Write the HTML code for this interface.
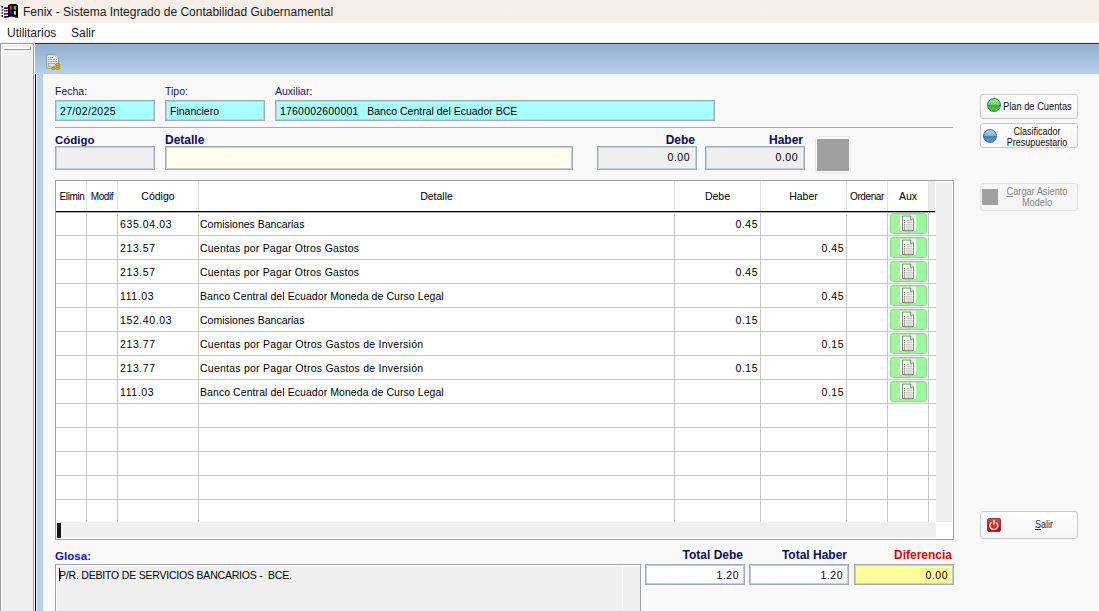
<!DOCTYPE html>
<html><head><meta charset="utf-8">
<style>
*{margin:0;padding:0;box-sizing:border-box}
html,body{width:1099px;height:611px;overflow:hidden;background:#f9f9f9}
body{position:relative;font-family:"Liberation Sans",sans-serif;color:#000}
.a{position:absolute}
.t{position:absolute;white-space:pre;line-height:13px;font-size:10.5px}
.lbl{color:#15155a}
.bl{font-weight:bold;color:#0c0c58;font-size:12px}
.box{position:absolute;border:1px solid #9eabb8;box-shadow:inset 0 0 0 1px #c6ced8}
.cy{background:#aaffff}
.gr{background:#f0f0f0}
.vl{position:absolute;width:1px;background:#c8c8c8}
.hl{position:absolute;height:1px;background:#c8c8c8}
.num{position:absolute;white-space:pre;line-height:13px;font-size:10.5px;text-align:right;letter-spacing:0.5px}
.btn{position:absolute;border:1px solid #c9c9c9;border-radius:3px;background:linear-gradient(#ffffff,#f6f6f6)}
.aux{position:absolute;left:890px;width:37px;height:21px;border-radius:3px;background:#9ff69f;border:1px solid #8ad88a}
.aux i{position:absolute;left:9px;top:1px;width:16px;height:16px;background:#fff}
</style></head><body>
<!-- title bar -->
<div class="a" style="left:0;top:0;width:1099px;height:23px;background:linear-gradient(#f8efe8 0,#f7f0ea 75%,#f5f1e6 100%)"></div>
<svg class="a" style="left:0;top:0" width="20" height="20" viewBox="0 0 20 20">
<path d="M8 5.5 L10 4 L16 4 L18 5.5 L18 18 L16 17.5 L11 16.6 L8 17.6 Z" fill="#000"/>
<path d="M10 6 L12.3 5.8 L12.3 9.6 L10 9.8Z" fill="#e02424"/><path d="M13.8 6 L16.2 6.3 L16.2 9.8 L13.8 9.6Z" fill="#38d838"/>
<path d="M9.8 10.8 L12.3 10.8 L12.3 14.6 L9.8 14.4Z" fill="#1414d8"/><path d="M13.9 11 L16 11.3 L16 14.8 L13.9 14.4Z" fill="#f0e830"/>
<rect x="1.6" y="6" width="1.4" height="1.8" fill="#000"/><rect x="1.6" y="9" width="1.4" height="1.8" fill="#8a3a3a"/><rect x="1.6" y="12" width="1.4" height="1.8" fill="#3030a0"/><rect x="1.6" y="15" width="1.4" height="1.8" fill="#000"/>
<path d="M4 7.6 L8 7.2 L8 8.8 L4 9Z" fill="#000"/><path d="M4 10.2 L8 10 L8 11.6 L4 11.8Z" fill="#d41818"/><path d="M4 13.2 L8 13 L8 14.6 L4 14.8Z" fill="#1010a0"/><path d="M4 16.2 L8 16 L8 17.6 L4 17.8Z" fill="#000"/>
</svg>
<div class="t" style="left:23px;top:5px;font-size:12px;line-height:14px;color:#1a1a1a">Fenix - Sistema Integrado de Contabilidad Gubernamental</div>
<!-- menu -->
<div class="a" style="left:0;top:23px;width:1099px;height:20px;background:#fff"></div>
<div class="a" style="left:0;top:42px;width:1099px;height:1px;background:#ececec"></div>
<div class="t" style="left:7px;top:26px;font-size:12px;line-height:14px;color:#1a1a1a">Utilitarios</div>
<div class="t" style="left:71px;top:26px;font-size:12px;line-height:14px;color:#1a1a1a">Salir</div>
<!-- left panel -->
<div class="a" style="left:0;top:43px;width:34px;height:568px;background:#f0f0f0;border:1px solid #a0a0a0;border-bottom:none;box-shadow:inset 1px 1px 0 #fafafa"></div>
<div class="a" style="left:4px;top:47px;width:27px;height:3px;background:#fff;border-bottom:1px solid #a0a0a0;border-right:1px solid #a0a0a0;"></div>
<!-- MDI child -->
<div class="a" style="left:34px;top:43px;width:1px;height:568px;background:#f8f8f8"></div>
<div class="a" style="left:35px;top:43px;width:1064px;height:1px;background:#2a3542"></div>
<div class="a" style="left:35px;top:44px;width:1064px;height:30px;background:linear-gradient(#93aecf,#b7d1ea)"></div>
<div class="a" style="left:35px;top:74px;width:1px;height:537px;background:#000"></div>
<div class="a" style="left:36px;top:74px;width:1px;height:537px;background:#f4f4f4"></div>
<div class="a" style="left:37px;top:74px;width:6px;height:537px;background:#b7d1ea"></div>
<!-- header icon -->
<svg class="a" style="left:42px;top:50px" width="22" height="22" viewBox="0 0 22 22">
<path d="M4.8 4.8 H13.2 L16.2 7.8 V18.2 H4.8 Z" fill="#f4f7f7" stroke="#7f8c8c" stroke-width="0.9"/>
<path d="M13.2 4.8 V7.8 H16.2" fill="#ffffff" stroke="#9aa" stroke-width="0.6"/>
<rect x="6.3" y="7" width="1" height="1" fill="#667"/><rect x="8" y="7" width="3" height="0.9" fill="#8a9494"/>
<rect x="6.2" y="9.1" width="4.2" height="0.9" fill="#8a9494"/><rect x="11" y="9.1" width="2.4" height="0.9" fill="#8a9494"/><rect x="14" y="9.1" width="1" height="0.9" fill="#8a9494"/>
<rect x="6.3" y="11.1" width="1" height="1" fill="#667"/><rect x="8" y="11.1" width="2" height="0.9" fill="#8a9494"/><rect x="11" y="11.1" width="3.6" height="0.9" fill="#8a9494"/>
<rect x="6.3" y="13.3" width="6.8" height="3" fill="#e6e8e2" stroke="#8a9494" stroke-width="0.8"/>
<g fill="#e9bb44" stroke="#8c6a1c" stroke-width="0.7">
<ellipse cx="11.5" cy="18.4" rx="2.2" ry="0.95"/>
<ellipse cx="15.7" cy="18.4" rx="2.2" ry="0.95"/>
<ellipse cx="15.7" cy="16.4" rx="2.2" ry="0.95"/>
<ellipse cx="15.7" cy="14.5" rx="2.2" ry="0.95"/>
</g>
</svg>
<!-- content -->
<div class="a" style="left:43px;top:74px;width:1056px;height:537px;background:#f9f9f9"></div>

<div class="t lbl" style="left:55px;top:85px">Fecha:</div>
<div class="t lbl" style="left:165px;top:85px">Tipo:</div>
<div class="t lbl" style="left:275px;top:85px">Auxiliar:</div>
<div class="box cy" style="left:55px;top:100px;width:100px;height:21px"></div>
<div class="box cy" style="left:165px;top:100px;width:100px;height:21px"></div>
<div class="box cy" style="left:275px;top:100px;width:440px;height:21px"></div>
<div class="t" style="left:60px;top:105px;letter-spacing:0.33px">27/02/2025</div>
<div class="t" style="left:170px;top:105px">Financiero</div>
<div class="t" style="left:280px;top:105px"><span style="letter-spacing:0.2px">1760002600001</span>   Banco Central del Ecuador BCE</div>
<div class="a" style="left:55px;top:127px;width:898px;height:1px;background:#a8a8a8"></div>

<div class="t bl" style="left:55px;top:134px;font-size:11.5px">Código</div>
<div class="t bl" style="left:165px;top:134px">Detalle</div>
<div class="t bl" style="left:597px;top:134px;width:98px;text-align:right">Debe</div>
<div class="t bl" style="left:705px;top:134px;width:98px;text-align:right">Haber</div>
<div class="box gr" style="left:55px;top:146px;width:100px;height:24px"></div>
<div class="box" style="left:165px;top:146px;width:408px;height:24px;background:#ffffee"></div>
<div class="box gr" style="left:597px;top:146px;width:100px;height:24px"></div>
<div class="box gr" style="left:705px;top:146px;width:100px;height:24px"></div>
<div class="num" style="left:600px;top:151px;width:90px">0.00</div>
<div class="num" style="left:708px;top:151px;width:90px">0.00</div>
<div class="a" style="left:815px;top:136px;width:36px;height:37px;border:1px solid #e8e8e8;border-radius:3px;background:#fdfdfd"></div>
<div class="a" style="left:817px;top:139px;width:32px;height:32px;background:#a0a0a0"></div>

<!-- grid -->
<div class="a" style="left:55px;top:180px;width:899px;height:360px;border:1px solid #a0a0a0;background:#fff"></div>
<div class="a" style="left:929px;top:181px;width:6px;height:30px;background:#ececec"></div>
<div class="vl" style="left:86px;top:181px;height:30px;background:#e2e2e2"></div>
<div class="vl" style="left:117px;top:181px;height:30px;background:#e2e2e2"></div>
<div class="vl" style="left:198px;top:181px;height:30px;background:#e2e2e2"></div>
<div class="vl" style="left:674px;top:181px;height:30px;background:#e2e2e2"></div>
<div class="vl" style="left:760px;top:181px;height:30px;background:#e2e2e2"></div>
<div class="vl" style="left:846px;top:181px;height:30px;background:#e2e2e2"></div>
<div class="vl" style="left:887px;top:181px;height:30px;background:#e2e2e2"></div>
<div class="vl" style="left:928px;top:181px;height:30px;background:#e2e2e2"></div>
<div class="a" style="left:56px;top:211px;width:879px;height:1px;background:#000"></div>
<div class="a" style="left:56px;top:212px;width:879px;height:1px;background:#b0b0b0"></div>
<div class="vl" style="left:86px;top:212px;height:310px"></div>
<div class="vl" style="left:117px;top:212px;height:310px"></div>
<div class="vl" style="left:198px;top:212px;height:310px"></div>
<div class="vl" style="left:674px;top:212px;height:310px"></div>
<div class="vl" style="left:760px;top:212px;height:310px"></div>
<div class="vl" style="left:846px;top:212px;height:310px"></div>
<div class="vl" style="left:887px;top:212px;height:310px"></div>
<div class="vl" style="left:928px;top:212px;height:310px"></div>
<div class="hl" style="left:56px;top:235px;width:880px"></div>
<div class="hl" style="left:56px;top:259px;width:880px"></div>
<div class="hl" style="left:56px;top:283px;width:880px"></div>
<div class="hl" style="left:56px;top:307px;width:880px"></div>
<div class="hl" style="left:56px;top:331px;width:880px"></div>
<div class="hl" style="left:56px;top:355px;width:880px"></div>
<div class="hl" style="left:56px;top:379px;width:880px"></div>
<div class="hl" style="left:56px;top:403px;width:880px"></div>
<div class="hl" style="left:56px;top:427px;width:880px"></div>
<div class="hl" style="left:56px;top:451px;width:880px"></div>
<div class="hl" style="left:56px;top:475px;width:880px"></div>
<div class="hl" style="left:56px;top:499px;width:880px"></div>
<div class="t" style="left:57px;top:190px;width:30px;text-align:center;font-size:10px;letter-spacing:-0.4px">Elimin</div>
<div class="t" style="left:87px;top:190px;width:30px;text-align:center;font-size:10px;letter-spacing:-0.4px">Modif</div>
<div class="t" style="left:118px;top:190px;width:80px;text-align:center;font-size:10.5px;letter-spacing:0">Código</div>
<div class="t" style="left:199px;top:190px;width:475px;text-align:center;font-size:10.5px;letter-spacing:0">Detalle</div>
<div class="t" style="left:675px;top:190px;width:85px;text-align:center;font-size:10.5px;letter-spacing:0">Debe</div>
<div class="t" style="left:761px;top:190px;width:85px;text-align:center;font-size:10.5px;letter-spacing:0">Haber</div>
<div class="t" style="left:847px;top:190px;width:40px;text-align:center;font-size:10px;letter-spacing:-0.4px">Ordenar</div>
<div class="t" style="left:888px;top:190px;width:40px;text-align:center;font-size:10.5px;letter-spacing:0">Aux</div>
<div class="t" style="left:120px;top:218px;letter-spacing:0.6px">635.04.03</div>
<div class="t" style="left:200px;top:218px;letter-spacing:0px">Comisiones Bancarias</div>
<div class="num" style="left:680px;top:218px;width:78px">0.45</div>
<div class="aux" style="top:213px"><i></i><svg class="a" style="left:11px;top:1px" width="13" height="17" viewBox="0 0 13 17"><path d="M0.6 1 H8.4 L11.6 4.2 V15.6 H0.6 Z" fill="#fff" stroke="#6a6a6a" stroke-width="0.9"/><path d="M0.6 1 H8.4" stroke="#c8c8c8" stroke-width="0.9"/><path d="M8.4 1 V4.2 H11.6" fill="#f6f6f6" stroke="#6a6a6a" stroke-width="0.8"/><g fill="#3c3c3c"><rect x="2.1" y="5.1" width="1" height="1"/><rect x="2.1" y="7.2" width="1" height="1"/><rect x="2.1" y="9.3" width="1" height="1"/><rect x="2.1" y="11.4" width="1" height="1"/><rect x="2.1" y="13.4" width="1" height="1"/></g><g fill="#b4b4b4"><rect x="4.2" y="5.1" width="5.8" height="1"/><rect x="4.2" y="7.2" width="5.8" height="1"/><rect x="4.2" y="9.3" width="5.8" height="1"/><rect x="4.2" y="11.4" width="5.8" height="1"/><rect x="4.2" y="13.4" width="5.8" height="1"/></g></svg></div>
<div class="t" style="left:120px;top:242px;letter-spacing:0.6px">213.57</div>
<div class="t" style="left:200px;top:242px;letter-spacing:0.21px">Cuentas por Pagar Otros Gastos</div>
<div class="num" style="left:766px;top:242px;width:78px">0.45</div>
<div class="aux" style="top:237px"><i></i><svg class="a" style="left:11px;top:1px" width="13" height="17" viewBox="0 0 13 17"><path d="M0.6 1 H8.4 L11.6 4.2 V15.6 H0.6 Z" fill="#fff" stroke="#6a6a6a" stroke-width="0.9"/><path d="M0.6 1 H8.4" stroke="#c8c8c8" stroke-width="0.9"/><path d="M8.4 1 V4.2 H11.6" fill="#f6f6f6" stroke="#6a6a6a" stroke-width="0.8"/><g fill="#3c3c3c"><rect x="2.1" y="5.1" width="1" height="1"/><rect x="2.1" y="7.2" width="1" height="1"/><rect x="2.1" y="9.3" width="1" height="1"/><rect x="2.1" y="11.4" width="1" height="1"/><rect x="2.1" y="13.4" width="1" height="1"/></g><g fill="#b4b4b4"><rect x="4.2" y="5.1" width="5.8" height="1"/><rect x="4.2" y="7.2" width="5.8" height="1"/><rect x="4.2" y="9.3" width="5.8" height="1"/><rect x="4.2" y="11.4" width="5.8" height="1"/><rect x="4.2" y="13.4" width="5.8" height="1"/></g></svg></div>
<div class="t" style="left:120px;top:266px;letter-spacing:0.6px">213.57</div>
<div class="t" style="left:200px;top:266px;letter-spacing:0.21px">Cuentas por Pagar Otros Gastos</div>
<div class="num" style="left:680px;top:266px;width:78px">0.45</div>
<div class="aux" style="top:261px"><i></i><svg class="a" style="left:11px;top:1px" width="13" height="17" viewBox="0 0 13 17"><path d="M0.6 1 H8.4 L11.6 4.2 V15.6 H0.6 Z" fill="#fff" stroke="#6a6a6a" stroke-width="0.9"/><path d="M0.6 1 H8.4" stroke="#c8c8c8" stroke-width="0.9"/><path d="M8.4 1 V4.2 H11.6" fill="#f6f6f6" stroke="#6a6a6a" stroke-width="0.8"/><g fill="#3c3c3c"><rect x="2.1" y="5.1" width="1" height="1"/><rect x="2.1" y="7.2" width="1" height="1"/><rect x="2.1" y="9.3" width="1" height="1"/><rect x="2.1" y="11.4" width="1" height="1"/><rect x="2.1" y="13.4" width="1" height="1"/></g><g fill="#b4b4b4"><rect x="4.2" y="5.1" width="5.8" height="1"/><rect x="4.2" y="7.2" width="5.8" height="1"/><rect x="4.2" y="9.3" width="5.8" height="1"/><rect x="4.2" y="11.4" width="5.8" height="1"/><rect x="4.2" y="13.4" width="5.8" height="1"/></g></svg></div>
<div class="t" style="left:120px;top:290px;letter-spacing:0.6px">111.03</div>
<div class="t" style="left:200px;top:290px;letter-spacing:0.07px">Banco Central del Ecuador Moneda de Curso Legal</div>
<div class="num" style="left:766px;top:290px;width:78px">0.45</div>
<div class="aux" style="top:285px"><i></i><svg class="a" style="left:11px;top:1px" width="13" height="17" viewBox="0 0 13 17"><path d="M0.6 1 H8.4 L11.6 4.2 V15.6 H0.6 Z" fill="#fff" stroke="#6a6a6a" stroke-width="0.9"/><path d="M0.6 1 H8.4" stroke="#c8c8c8" stroke-width="0.9"/><path d="M8.4 1 V4.2 H11.6" fill="#f6f6f6" stroke="#6a6a6a" stroke-width="0.8"/><g fill="#3c3c3c"><rect x="2.1" y="5.1" width="1" height="1"/><rect x="2.1" y="7.2" width="1" height="1"/><rect x="2.1" y="9.3" width="1" height="1"/><rect x="2.1" y="11.4" width="1" height="1"/><rect x="2.1" y="13.4" width="1" height="1"/></g><g fill="#b4b4b4"><rect x="4.2" y="5.1" width="5.8" height="1"/><rect x="4.2" y="7.2" width="5.8" height="1"/><rect x="4.2" y="9.3" width="5.8" height="1"/><rect x="4.2" y="11.4" width="5.8" height="1"/><rect x="4.2" y="13.4" width="5.8" height="1"/></g></svg></div>
<div class="t" style="left:120px;top:314px;letter-spacing:0.6px">152.40.03</div>
<div class="t" style="left:200px;top:314px;letter-spacing:0px">Comisiones Bancarias</div>
<div class="num" style="left:680px;top:314px;width:78px">0.15</div>
<div class="aux" style="top:309px"><i></i><svg class="a" style="left:11px;top:1px" width="13" height="17" viewBox="0 0 13 17"><path d="M0.6 1 H8.4 L11.6 4.2 V15.6 H0.6 Z" fill="#fff" stroke="#6a6a6a" stroke-width="0.9"/><path d="M0.6 1 H8.4" stroke="#c8c8c8" stroke-width="0.9"/><path d="M8.4 1 V4.2 H11.6" fill="#f6f6f6" stroke="#6a6a6a" stroke-width="0.8"/><g fill="#3c3c3c"><rect x="2.1" y="5.1" width="1" height="1"/><rect x="2.1" y="7.2" width="1" height="1"/><rect x="2.1" y="9.3" width="1" height="1"/><rect x="2.1" y="11.4" width="1" height="1"/><rect x="2.1" y="13.4" width="1" height="1"/></g><g fill="#b4b4b4"><rect x="4.2" y="5.1" width="5.8" height="1"/><rect x="4.2" y="7.2" width="5.8" height="1"/><rect x="4.2" y="9.3" width="5.8" height="1"/><rect x="4.2" y="11.4" width="5.8" height="1"/><rect x="4.2" y="13.4" width="5.8" height="1"/></g></svg></div>
<div class="t" style="left:120px;top:338px;letter-spacing:0.6px">213.77</div>
<div class="t" style="left:200px;top:338px;letter-spacing:0.24px">Cuentas por Pagar Otros Gastos de Inversión</div>
<div class="num" style="left:766px;top:338px;width:78px">0.15</div>
<div class="aux" style="top:333px"><i></i><svg class="a" style="left:11px;top:1px" width="13" height="17" viewBox="0 0 13 17"><path d="M0.6 1 H8.4 L11.6 4.2 V15.6 H0.6 Z" fill="#fff" stroke="#6a6a6a" stroke-width="0.9"/><path d="M0.6 1 H8.4" stroke="#c8c8c8" stroke-width="0.9"/><path d="M8.4 1 V4.2 H11.6" fill="#f6f6f6" stroke="#6a6a6a" stroke-width="0.8"/><g fill="#3c3c3c"><rect x="2.1" y="5.1" width="1" height="1"/><rect x="2.1" y="7.2" width="1" height="1"/><rect x="2.1" y="9.3" width="1" height="1"/><rect x="2.1" y="11.4" width="1" height="1"/><rect x="2.1" y="13.4" width="1" height="1"/></g><g fill="#b4b4b4"><rect x="4.2" y="5.1" width="5.8" height="1"/><rect x="4.2" y="7.2" width="5.8" height="1"/><rect x="4.2" y="9.3" width="5.8" height="1"/><rect x="4.2" y="11.4" width="5.8" height="1"/><rect x="4.2" y="13.4" width="5.8" height="1"/></g></svg></div>
<div class="t" style="left:120px;top:362px;letter-spacing:0.6px">213.77</div>
<div class="t" style="left:200px;top:362px;letter-spacing:0.24px">Cuentas por Pagar Otros Gastos de Inversión</div>
<div class="num" style="left:680px;top:362px;width:78px">0.15</div>
<div class="aux" style="top:357px"><i></i><svg class="a" style="left:11px;top:1px" width="13" height="17" viewBox="0 0 13 17"><path d="M0.6 1 H8.4 L11.6 4.2 V15.6 H0.6 Z" fill="#fff" stroke="#6a6a6a" stroke-width="0.9"/><path d="M0.6 1 H8.4" stroke="#c8c8c8" stroke-width="0.9"/><path d="M8.4 1 V4.2 H11.6" fill="#f6f6f6" stroke="#6a6a6a" stroke-width="0.8"/><g fill="#3c3c3c"><rect x="2.1" y="5.1" width="1" height="1"/><rect x="2.1" y="7.2" width="1" height="1"/><rect x="2.1" y="9.3" width="1" height="1"/><rect x="2.1" y="11.4" width="1" height="1"/><rect x="2.1" y="13.4" width="1" height="1"/></g><g fill="#b4b4b4"><rect x="4.2" y="5.1" width="5.8" height="1"/><rect x="4.2" y="7.2" width="5.8" height="1"/><rect x="4.2" y="9.3" width="5.8" height="1"/><rect x="4.2" y="11.4" width="5.8" height="1"/><rect x="4.2" y="13.4" width="5.8" height="1"/></g></svg></div>
<div class="t" style="left:120px;top:386px;letter-spacing:0.6px">111.03</div>
<div class="t" style="left:200px;top:386px;letter-spacing:0.07px">Banco Central del Ecuador Moneda de Curso Legal</div>
<div class="num" style="left:766px;top:386px;width:78px">0.15</div>
<div class="aux" style="top:381px"><i></i><svg class="a" style="left:11px;top:1px" width="13" height="17" viewBox="0 0 13 17"><path d="M0.6 1 H8.4 L11.6 4.2 V15.6 H0.6 Z" fill="#fff" stroke="#6a6a6a" stroke-width="0.9"/><path d="M0.6 1 H8.4" stroke="#c8c8c8" stroke-width="0.9"/><path d="M8.4 1 V4.2 H11.6" fill="#f6f6f6" stroke="#6a6a6a" stroke-width="0.8"/><g fill="#3c3c3c"><rect x="2.1" y="5.1" width="1" height="1"/><rect x="2.1" y="7.2" width="1" height="1"/><rect x="2.1" y="9.3" width="1" height="1"/><rect x="2.1" y="11.4" width="1" height="1"/><rect x="2.1" y="13.4" width="1" height="1"/></g><g fill="#b4b4b4"><rect x="4.2" y="5.1" width="5.8" height="1"/><rect x="4.2" y="7.2" width="5.8" height="1"/><rect x="4.2" y="9.3" width="5.8" height="1"/><rect x="4.2" y="11.4" width="5.8" height="1"/><rect x="4.2" y="13.4" width="5.8" height="1"/></g></svg></div>
<div class="a" style="left:936px;top:182px;width:16px;height:340px;background:#f0f0f0"></div>
<div class="a" style="left:56px;top:522px;width:880px;height:16px;background:#f0f0f0"></div>
<div class="a" style="left:56px;top:522px;width:880px;height:0px;background:#fff"></div>
<div class="a" style="left:57px;top:523px;width:4px;height:15px;background:#111"></div>
<div class="t" style="left:55px;top:549px;font-weight:bold;font-size:11.6px;color:#1212b8">Glosa:</div>
<div class="a" style="left:55px;top:564px;width:586px;height:60px;border:1px solid #a0a0a0;background:#f0f0f0;box-shadow:inset 1px 1px 0 #fff"></div>
<div class="a" style="left:622px;top:566px;width:1px;height:60px;background:#fff"></div>
<div class="t" style="left:59px;top:569px;letter-spacing:-0.2px">P/R. DEBITO DE SERVICIOS BANCARIOS -  BCE.</div>
<div class="a" style="left:59px;top:568px;width:1px;height:13px;background:#10104a"></div>
<div class="t bl" style="left:645px;top:549px;width:98px;text-align:right">Total Debe</div>
<div class="t bl" style="left:749px;top:549px;width:98px;text-align:right">Total Haber</div>
<div class="t bl" style="left:854px;top:549px;width:98px;text-align:right;color:#d80808">Diferencia</div>
<div class="box" style="left:645px;top:564px;width:100px;height:21px;background:#fff"></div>
<div class="box" style="left:749px;top:564px;width:100px;height:21px;background:#fff"></div>
<div class="box" style="left:854px;top:564px;width:100px;height:21px;background:#ffff99"></div>
<div class="num" style="left:650px;top:569px;width:89px">1.20</div>
<div class="num" style="left:754px;top:569px;width:89px">1.20</div>
<div class="num" style="left:859px;top:569px;width:89px">0.00</div>
<div class="btn" style="left:980px;top:94px;width:98px;height:25px"></div>
<svg class="a" style="left:987px;top:98px" width="14" height="14" viewBox="0 0 14 14"><defs><linearGradient id="gg" x1="0" y1="0" x2="0" y2="1"><stop offset="0" stop-color="#98f098"/><stop offset="0.45" stop-color="#74da74"/><stop offset="0.52" stop-color="#38ac38"/><stop offset="1" stop-color="#5cc85c"/></linearGradient></defs><circle cx="7" cy="7" r="6.4" fill="url(#gg)" stroke="#2a7a2a" stroke-width="1"/></svg>
<div class="t" style="left:1003px;top:100px;font-size:10px;color:#111;transform:scaleX(0.93);transform-origin:0 0">Plan de Cuentas</div>
<div class="btn" style="left:980px;top:123px;width:98px;height:25px"></div>
<svg class="a" style="left:983px;top:129px" width="14" height="14" viewBox="0 0 14 14"><defs><linearGradient id="bg" x1="0" y1="0" x2="0" y2="1"><stop offset="0" stop-color="#b0d4f8"/><stop offset="0.45" stop-color="#88b8e8"/><stop offset="0.52" stop-color="#4a80c0"/><stop offset="1" stop-color="#6a9ad4"/></linearGradient></defs><circle cx="7" cy="7" r="6.4" fill="url(#bg)" stroke="#3a6090" stroke-width="1"/></svg>
<div class="t" style="left:999px;top:126px;width:76px;text-align:center;font-size:10px;line-height:11px;color:#111;transform:scaleX(0.9);transform-origin:38px 0">Clasificador<br>Presupuestario</div>
<div class="btn" style="left:980px;top:183px;width:98px;height:28px;border-color:#e2e2e2;background:#f7f7f7"></div>
<div class="a" style="left:982px;top:189px;width:16px;height:16px;background:#a0a0a0"></div>
<div class="t" style="left:999px;top:186px;width:76px;text-align:center;font-size:10px;line-height:11px;color:#828282;transform:scaleX(0.92);transform-origin:38px 0"><u>C</u>argar Asiento<br>Modelo</div>
<div class="btn" style="left:980px;top:511px;width:98px;height:28px"></div>
<svg class="a" style="left:987px;top:518px" width="14" height="14" viewBox="0 0 14 14"><defs><linearGradient id="rg" x1="0" y1="0" x2="0" y2="1"><stop offset="0" stop-color="#d85050"/><stop offset="0.5" stop-color="#c42020"/><stop offset="1" stop-color="#a01010"/></linearGradient><radialGradient id="rc" cx="0.5" cy="0.55" r="0.3"><stop offset="0" stop-color="#f03030"/><stop offset="1" stop-color="#f03030" stop-opacity="0"/></radialGradient></defs><rect x="0.5" y="0.5" width="13" height="13" rx="1.5" fill="url(#rg)" stroke="#9a1818" stroke-width="0.8"/><rect x="0" y="0" width="14" height="14" fill="url(#rc)"/><path d="M4.6 4.3 A4 4 0 1 0 9.1 4.3" fill="none" stroke="#fbe8e8" stroke-width="1.5"/><path d="M6.85 1.8 V6.6" stroke="#fbe8e8" stroke-width="1.8"/></svg>
<div class="t" style="left:1035px;top:518px;font-size:10px;color:#1a1a5a;transform:scaleX(0.9);transform-origin:0 0"><u>S</u>alir</div>
</body></html>
